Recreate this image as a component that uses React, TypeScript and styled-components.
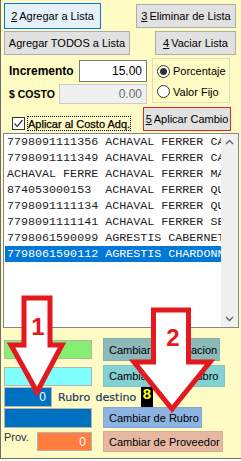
import React from "react";
import styled, { createGlobalStyle } from "styled-components";

const Global = createGlobalStyle`
  html, body { margin: 0; padding: 0; background: #ffffff; }
  body { font-family: "Liberation Sans", Arial, sans-serif; font-size: 11px; color: #000; }
`;

const Panel = styled.div`
  position: relative;
  width: 241px;
  height: 459px;
  box-sizing: border-box;
  background: #fffbc4;
  border-left: 1px solid #6d6d6d;
  border-bottom: 1px solid #6d6d6d;
  display: flex;
  flex-direction: column;
  overflow: hidden;
`;

const ButtonRow = styled.div<{ $mt: number; $h: number }>`
  display: flex;
  align-items: center;
  justify-content: space-between;
  margin-top: ${(p) => p.$mt}px;
  height: ${(p) => p.$h}px;
  padding: 0 5px 0 3px;
`;

const WinButton = styled.div<{ $w: number; $h: number; $focused?: boolean; $accent?: boolean }>`
  box-sizing: border-box;
  width: ${(p) => p.$w}px;
  height: ${(p) => p.$h}px;
  display: flex;
  align-items: center;
  justify-content: center;
  font-family: "Liberation Sans", Arial, sans-serif;
  font-size: 11px;
  color: #000;
  white-space: nowrap;
  background: ${(p) => (p.$focused ? "#e5f1fb" : "#e1e1e1")};
  border: 1px solid ${(p) => (p.$focused ? "#0078d7" : p.$accent ? "#d42a2a" : "#adadad")};
  u { text-decoration: underline; margin-right: 2px; }
`;

const Settings = styled.div`
  display: flex;
  margin-top: 3px;
  padding-left: 3px;
  height: 46px;
`;

const FieldCol = styled.div`
  display: flex;
  flex-direction: column;
  width: 143px;
  padding-top: 2px;
  gap: 2px;
`;

const FieldRow = styled.div<{ $h: number }>`
  display: flex;
  align-items: center;
  height: ${(p) => p.$h}px;
`;

const FieldLabel = styled.span<{ $w: number; $fs: number }>`
  box-sizing: border-box;
  width: ${(p) => p.$w}px;
  padding-left: 5px;
  font-weight: bold;
  font-size: ${(p) => p.$fs}px;
  white-space: nowrap;
`;

const NumBox = styled.div<{ $w: number; $h: number; $disabled?: boolean }>`
  box-sizing: border-box;
  width: ${(p) => p.$w}px;
  height: ${(p) => p.$h}px;
  border: 1px solid ${(p) => (p.$disabled ? "#cccccc" : "#7a7a7a")};
  background: ${(p) => (p.$disabled ? "#f0f0f0" : "#ffffff")};
  color: ${(p) => (p.$disabled ? "#6d6d6d" : "#000")};
  font-size: 12px;
  display: flex;
  align-items: center;
  justify-content: flex-end;
  padding-right: 4px;
`;

const RadioBox = styled.div`
  box-sizing: border-box;
  margin-left: 5px;
  width: 78px;
  height: 45px;
  border: 1px solid #dedcc4;
  padding: 2px 0 0 4px;
  display: flex;
  flex-direction: column;
`;

const RadioRow = styled.div`
  display: flex;
  align-items: center;
  height: 21px;
  gap: 3px;
  font-size: 11px;
`;

const RadioDot = styled.span<{ $on?: boolean }>`
  box-sizing: border-box;
  width: 13px;
  height: 13px;
  border-radius: 50%;
  border: 1px solid #333;
  background: #fff;
  display: flex;
  align-items: center;
  justify-content: center;
  &::after {
    content: "";
    width: 7px;
    height: 7px;
    border-radius: 50%;
    background: ${(p) => (p.$on ? "#333" : "transparent")};
  }
`;

const CheckRow = styled.div`
  display: flex;
  margin-top: 3px;
  height: 24px;
  padding: 0 10px 0 11px;
`;

const CheckBox = styled.span`
  box-sizing: border-box;
  align-self: flex-end;
  margin-bottom: 1px;
  width: 13px;
  height: 13px;
  border: 1px solid #333;
  background: #fff;
  display: flex;
  align-items: center;
  justify-content: center;
`;

const CheckLabel = styled.span`
  box-sizing: border-box;
  align-self: flex-end;
  margin-left: 2px;
  height: 15px;
  padding: 0 1px;
  outline: 1px dotted #000;
  outline-offset: -1px;
  display: flex;
  align-items: center;
  font-size: 11px;
  white-space: nowrap;
  -webkit-text-stroke: 0.25px #000;
`;

const ApplyButton = styled(WinButton)`
  margin-left: auto;
`;

const ListBox = styled.div`
  box-sizing: border-box;
  margin: 2px 0 0 2px;
  width: 236px;
  height: 195px;
  border: 1px solid #828790;
  background: #fff;
  display: flex;
`;

const Rows = styled.div`
  flex: 1;
  padding-left: 1px;
  overflow: hidden;
`;

const Row = styled.div<{ $sel?: boolean }>`
  height: 16px;
  line-height: 16px;
  padding-left: 2px;
  white-space: pre;
  overflow: hidden;
  font-family: "Liberation Mono", "Courier New", monospace;
  font-size: 11.7px;
  color: ${(p) => (p.$sel ? "#fff" : "#222")};
  background: ${(p) => (p.$sel ? "#0078d7" : "transparent")};
`;

const ScrollBar = styled.div`
  width: 17px;
  background: #f0f0f0;
  display: flex;
  flex-direction: column;
  justify-content: space-between;
  align-items: center;
  padding: 5px 0;
  box-sizing: border-box;
`;

const Lower = styled.div`
  display: flex;
  flex-direction: column;
  margin-top: 10px;
  padding-left: 3px;
`;

const ActionRow = styled.div<{ $h: number; $mt?: number }>`
  display: flex;
  align-items: center;
  height: ${(p) => p.$h}px;
  margin-top: ${(p) => p.$mt ?? 0}px;
`;

const Swatch = styled.div<{ $bg: string; $w: number; $h: number }>`
  box-sizing: border-box;
  width: ${(p) => p.$w}px;
  height: ${(p) => p.$h}px;
  background: ${(p) => p.$bg};
  border: 1px solid #b4b4b4;
  color: #fff;
  font-size: 12px;
  display: flex;
  align-items: center;
  justify-content: flex-end;
  padding-right: 5px;
`;

const ColorButton = styled.div<{ $bg: string; $w: number; $h: number }>`
  box-sizing: border-box;
  margin-left: 11px;
  width: ${(p) => p.$w}px;
  height: ${(p) => p.$h}px;
  background: ${(p) => p.$bg};
  border: 1px solid rgba(0, 0, 0, 0.06);
  display: flex;
  align-items: center;
  padding-left: 5px;
  font-size: 11px;
  white-space: nowrap;
  overflow: hidden;
`;

const DestLabel = styled.span`
  width: 83px;
  margin-left: 6px;
  font-family: "DejaVu Sans", Verdana, sans-serif;
  font-size: 11px;
  word-spacing: 2px;
  color: #1f3864;
  white-space: nowrap;
  -webkit-text-stroke: 0.2px #1f3864;
`;

const CodeChip = styled.span`
  width: 12px;
  height: 20px;
  background: #000;
  color: #ffff00;
  font-weight: bold;
  font-size: 15px;
  line-height: 14px;
  text-align: center;
`;

const ProvLabel = styled.span`
  align-self: flex-start;
  width: 33px;
  font-size: 11px;
  color: #1f2d4a;
`;

const Overlay = styled.svg`
  position: absolute;
  left: -1px;
  top: 0;
  width: 241px;
  height: 461px;
  pointer-events: none;
`;

const listItems = [
  "7798091111356 ACHAVAL FERRER CABERNET",
  "7798091111349 ACHAVAL FERRER CABERNET",
  "ACHAVAL FERRE ACHAVAL FERRER MALBEC",
  "874053000153  ACHAVAL FERRER QUIMERA",
  "7798091111134 ACHAVAL FERRER QUIMERA",
  "7798091111141 ACHAVAL FERRER SEMILLON",
  "7798061590099 AGRESTIS CABERNET",
  "7798061590112 AGRESTIS CHARDONNAY",
];

const Chevron = ({ up }: { up?: boolean }) => (
  <svg width="9" height="6" viewBox="0 0 9 6">
    <polyline
      points={up ? "1,5 4.5,1.5 8,5" : "1,1 4.5,4.5 8,1"}
      fill="none"
      stroke="#606060"
      strokeWidth="1.3"
    />
  </svg>
);

export default function App() {
  return (
    <>
      <Global />
      <Panel>
        <ButtonRow $mt={3} $h={26}>
          <WinButton $w={97} $h={26} $focused>
            <u>2</u>Agregar a Lista
          </WinButton>
          <WinButton $w={100} $h={24}>
            <u>3</u>Eliminar de Lista
          </WinButton>
        </ButtonRow>
        <ButtonRow $mt={2} $h={24}>
          <WinButton $w={126} $h={24}>Agregar TODOS a Lista</WinButton>
          <WinButton $w={81} $h={24}>
            <u>4</u>Vaciar Lista
          </WinButton>
        </ButtonRow>

        <Settings>
          <FieldCol>
            <FieldRow $h={22}>
              <FieldLabel $w={75} $fs={12}>Incremento</FieldLabel>
              <NumBox $w={68} $h={22}>15.00</NumBox>
            </FieldRow>
            <FieldRow $h={20}>
              <FieldLabel $w={55} $fs={10.5}>$ COSTO</FieldLabel>
              <NumBox $w={88} $h={20} $disabled>0.00</NumBox>
            </FieldRow>
          </FieldCol>
          <RadioBox>
            <RadioRow>
              <RadioDot $on />
              Porcentaje
            </RadioRow>
            <RadioRow>
              <RadioDot />
              Valor Fijo
            </RadioRow>
          </RadioBox>
        </Settings>

        <CheckRow>
          <CheckBox>
            <svg width="11" height="11" viewBox="0 0 11 11">
              <polyline points="1.5,5.5 4.2,8.3 9.5,2" fill="none" stroke="#333" strokeWidth="1.2" />
            </svg>
          </CheckBox>
          <CheckLabel>Aplicar al Costo Adq.</CheckLabel>
          <ApplyButton $w={88} $h={24} $accent>
            <u>5</u>Aplicar Cambio
          </ApplyButton>
        </CheckRow>

        <ListBox>
          <Rows>
            {listItems.map((t, i) => (
              <Row key={i} $sel={i === 7}>
                {t}
              </Row>
            ))}
          </Rows>
          <ScrollBar>
            <Chevron up />
            <Chevron />
          </ScrollBar>
        </ListBox>

        <Lower>
          <ActionRow $h={23}>
            <Swatch $bg="#86ee70" $w={88} $h={19} />
            <ColorButton $bg="#8cb9b9" $w={117} $h={23}>Cambiar de Ubicacion</ColorButton>
          </ActionRow>
          <ActionRow $h={22} $mt={4}>
            <Swatch $bg="#80ffff" $w={88} $h={19} />
            <ColorButton $bg="#84d1d3" $w={122} $h={22}>Cambiar de SubRubro</ColorButton>
          </ActionRow>
          <ActionRow $h={20}>
            <Swatch $bg="#0070c0" $w={48} $h={20}>0</Swatch>
            <DestLabel>Rubro destino</DestLabel>
            <CodeChip>8</CodeChip>
          </ActionRow>
          <ActionRow $h={21}>
            <Swatch $bg="#0070c0" $w={88} $h={20} />
            <ColorButton $bg="#8db3e2" $w={99} $h={21}>Cambiar de Rubro</ColorButton>
          </ActionRow>
          <ActionRow $h={21} $mt={3}>
            <ProvLabel>Prov.</ProvLabel>
            <Swatch $bg="#ff7d3f" $w={55} $h={19}>0</Swatch>
            <ColorButton $bg="#e6b8a2" $w={120} $h={21}>Cambiar de Proveedor</ColorButton>
          </ActionRow>
        </Lower>

        <Overlay viewBox="0 0 241 461">
          <polygon
            points="24,298 50,298 50,345 62,345 37,392 11,345 24,345"
            fill="#fff"
            stroke="#e3191f"
            strokeWidth="5"
            strokeLinejoin="miter"
          />
          <text x="38" y="335" textAnchor="middle" fill="#e3191f" fontFamily="Liberation Sans, Arial, sans-serif" fontWeight="bold" fontSize="24">
            1
          </text>
          <polygon
            points="153.5,310 188.5,310 188.5,362 210,362 172,409 134,362 153.5,362"
            fill="#fff"
            stroke="#e3191f"
            strokeWidth="5"
            strokeLinejoin="miter"
          />
          <text x="173" y="346" textAnchor="middle" fill="#e3191f" fontFamily="Liberation Sans, Arial, sans-serif" fontWeight="bold" fontSize="24">
            2
          </text>
        </Overlay>
      </Panel>
    </>
  );
}
